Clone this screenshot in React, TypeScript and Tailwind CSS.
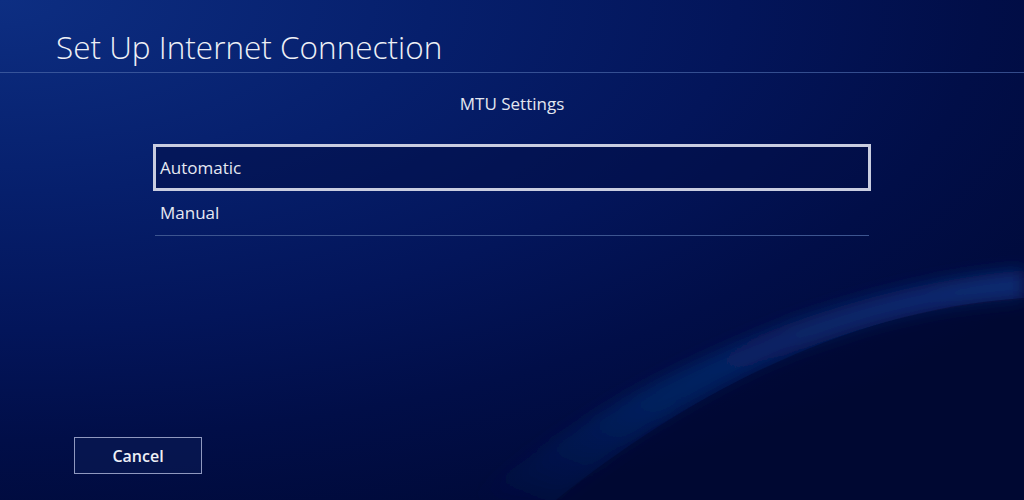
export default function App() {
  return (
    <div
      className="relative h-[500px] w-[1024px] overflow-hidden bg-[radial-gradient(ellipse_120%_110%_at_0%_0%,#0d2e82_0%,#061f6c_35%,#03155a_60%,#010e48_80%,#000a3a_100%)] text-[#e6e9f2]"
      style={{ fontFamily: '"Open Sans", "Noto Sans", sans-serif' }}
    >
      {/* background wave */}
      <svg className="absolute inset-0" width="1024" height="500" viewBox="0 0 1024 500">
        <defs>
          <linearGradient id="wave" x1="0" y1="1" x2="1" y2="0">
            <stop offset="0" stopColor="#06205e" stopOpacity="0" />
            <stop offset="0.35" stopColor="#082668" stopOpacity="0.7" />
            <stop offset="1" stopColor="#0a2d78" stopOpacity="0.9" />
          </linearGradient>
          <filter id="blur" x="-20%" y="-20%" width="140%" height="140%">
            <feGaussianBlur stdDeviation="8" />
          </filter>
        </defs>
        <path
          d="M470 500 C 600 400, 800 290, 1024 270 L 1024 300 C 850 310, 680 390, 560 500 Z"
          fill="url(#wave)"
          filter="url(#blur)"
        />
        <path d="M556 500 C 700 385, 860 308, 1024 298 L1024 500 Z" fill="#000628" opacity="0.4" />
      </svg>

      <div className="relative flex h-full flex-col">
        <div className="border-b border-[#4a67a8]/70 pl-[56px] pt-[29px] pb-[7px]">
          <h1 className="text-[31.5px] font-light leading-[36px] text-[#eef0f6]">
            Set Up Internet Connection
          </h1>
        </div>

        <p className="mt-[19px] text-center text-[17px] leading-[24px] text-[#e3e6f0]">MTU Settings</p>

        <div className="mx-auto mt-[28px] w-[718px]">
          <div className="flex h-[47px] items-center border-[3px] border-[#c9cde0] bg-[#020d45]/50 pl-[4px] text-[17px]">
            Automatic
          </div>
          <div className="mx-[2px] flex h-[45px] items-center border-b border-[#3d5590] pl-[5px] text-[17px]">
            Manual
          </div>
        </div>

        <div className="mt-auto mb-[26px] ml-[74px]">
          <button className="flex h-[37px] w-[128px] items-center justify-center border border-[#8f98bf] bg-[#0a1a55]/60 text-[16px] font-semibold text-[#eef0f6]">
            Cancel
          </button>
        </div>
      </div>
    </div>
  );
}
